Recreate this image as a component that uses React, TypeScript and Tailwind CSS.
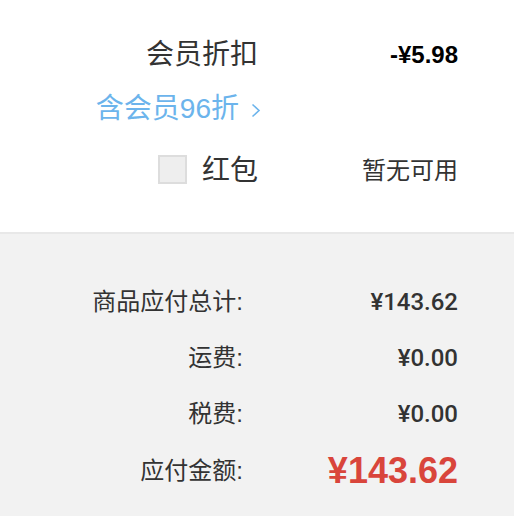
import React from "react";

const font = { fontFamily: '"Liberation Sans", "Noto Sans CJK SC", sans-serif' };

function Row({ label, value, red }: { label: string; value: string; red?: boolean }) {
  return (
    <div className="flex h-[56px] items-center">
      <div className="w-[243px] text-right text-[24px] text-[#333]">{label}</div>
      <div
        className={
          red
            ? "flex-1 pr-[56px] text-right text-[36px] font-bold text-[#d9453b]"
            : "flex-1 pr-[56px] text-right text-[24px] font-medium text-[#333]"
        }
        style={red ? undefined : { fontFamily: 'Roboto, "Liberation Sans", sans-serif' }}
      >
        {value}
      </div>
    </div>
  );
}

export default function App() {
  return (
    <div className="w-[514px] h-[516px] bg-[#f2f2f2] overflow-hidden" style={font}>
      <div className="h-[234px] bg-white border-b-2 border-[#e8e8e8] pt-[27px]">
        <div className="flex h-[56px] items-center">
          <div className="w-[258px] text-right text-[28px] text-[#333]">会员折扣</div>
          <div className="flex-1 pr-[56px] text-right text-[24px] font-bold text-black">-¥5.98</div>
        </div>
        <div className="flex h-[52px] items-center">
          <div className="w-[261px] flex items-center justify-end gap-[12px] text-[28px] text-[#6cb4ec]">
            <span>含会员96折</span>
            <svg width="10" height="15" viewBox="0 0 10 15" className="mt-[2px]">
              <path d="M1.5 1.5 L8 7.5 L1.5 13.5" fill="none" stroke="#6cb4ec" strokeWidth="1.6" />
            </svg>
          </div>
        </div>
        <div className="flex h-[72px] items-center">
          <div className="w-[258px] flex items-center justify-end gap-[15px]">
            <div className="w-[29px] h-[29px] bg-[#eeeeee] border-2 border-[#dddddd] -mt-[4px]" />
            <span className="text-[28px] text-[#333]">红包</span>
          </div>
          <div className="flex-1 pr-[56px] text-right text-[24px] text-[#333]">暂无可用</div>
        </div>
      </div>
      <div className="pt-[40px]">
        <Row label="商品应付总计:" value="¥143.62" />
        <Row label="运费:" value="¥0.00" />
        <Row label="税费:" value="¥0.00" />
        <div className="mt-[1px]">
          <Row label="应付金额:" value="¥143.62" red />
        </div>
      </div>
    </div>
  );
}
